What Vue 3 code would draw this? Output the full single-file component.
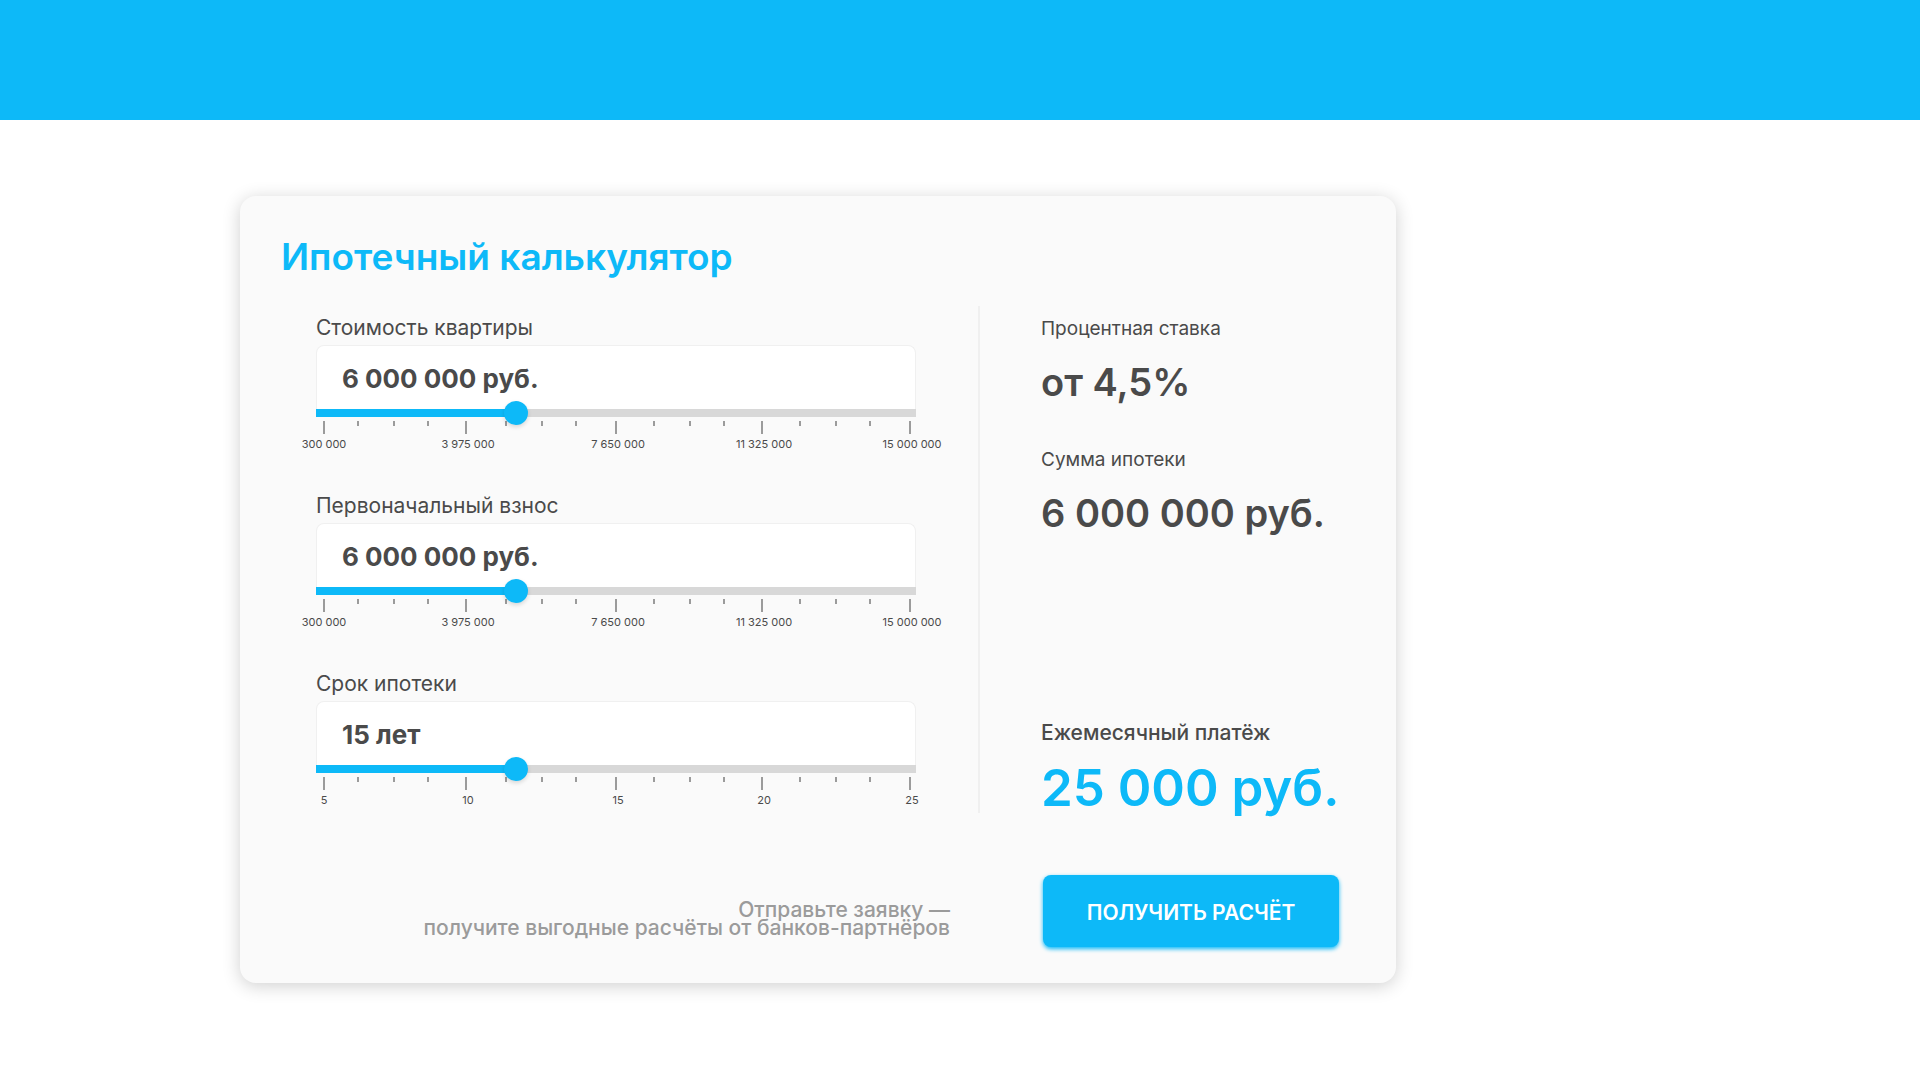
<script setup>
import { reactive } from 'vue'

const money = ['300 000', '3 975 000', '7 650 000', '11 325 000', '15 000 000']

const fields = reactive([
  { id: 'price', label: 'Стоимость квартиры', value: '6 000 000 руб.', position: 326, marks: money },
  { id: 'deposit', label: 'Первоначальный взнос', value: '6 000 000 руб.', position: 326, marks: money },
  { id: 'term', label: 'Срок ипотеки', value: '15 лет', position: 326, marks: ['5', '10', '15', '20', '25'] }
])

const ticks = [8, 42, 78, 112, 150, 190, 226, 260, 300, 338, 374, 408, 446, 484, 520, 554, 594]
</script>

<template>
  <header class="topbar"></header>
  <main class="page">
    <form class="card" @submit.prevent>
      <h1 class="title">Ипотечный калькулятор</h1>

      <div class="columns">
        <div class="fields">
          <div v-for="field in fields" :key="field.id" class="field">
            <label class="field-label" :for="field.id">{{ field.label }}</label>
            <input :id="field.id" v-model="field.value" class="field-input" type="text" />
            <input
              v-model="field.position"
              class="slider"
              type="range"
              min="0"
              max="1000"
              :aria-label="field.label"
              :style="{ '--position': field.position / 1000 }"
            />
            <svg class="ticks" viewBox="0 0 600 14" aria-hidden="true">
              <rect
                v-for="(x, i) in ticks"
                :key="x"
                :x="x - 1"
                y="1"
                width="2"
                :height="i % 4 === 0 ? 13 : 5"
              />
            </svg>
            <div class="marks">
              <span v-for="mark in field.marks" :key="mark" class="mark">{{ mark }}</span>
            </div>
          </div>
        </div>

        <dl class="results">
          <div class="result">
            <dt>Процентная ставка</dt>
            <dd>от 4,5%</dd>
          </div>
          <div class="result">
            <dt>Сумма ипотеки</dt>
            <dd>6 000 000 руб.</dd>
          </div>
          <div class="result payment">
            <dt>Ежемесячный платёж</dt>
            <dd>25 000 руб.</dd>
          </div>
        </dl>
      </div>

      <div class="actions">
        <p class="hint">Отправьте заявку —<br />получите выгодные расчёты от банков-партнёров</p>
        <button class="submit" type="submit">ПОЛУЧИТЬ РАСЧЁТ</button>
      </div>
    </form>
  </main>
</template>

<style>
body {
  margin: 0;
  background: #fff;
}
</style>

<style scoped>
.topbar {
  height: 120px;
  background: #0db9f8;
}

.page {
  padding: 76px 240px;
  color: #4a4a4a;
  font-family: Inter, "Noto Sans", sans-serif;
}

.card {
  box-sizing: border-box;
  max-width: 1156px;
  padding: 39px 57px 36px 41px;
  border-radius: 16px;
  background: #fafafa;
  box-shadow: 0 3px 18px rgba(0, 0, 0, 0.19);
}

.title {
  margin: 0 0 27px;
  color: #0db9f8;
  font-size: 37px;
  font-weight: 600;
  line-height: 44px;
}

.columns,
.actions {
  display: grid;
  grid-template-columns: minmax(0, 1fr) 359px;
}

.fields {
  display: flex;
  flex-direction: column;
  gap: 43px;
  padding: 10px 62px 6px 35px;
  border-right: 2px solid #f0f0f0;
}

.field {
  display: flex;
  flex-direction: column;
}

.field-label {
  margin-bottom: 5px;
  font-size: 21px;
  line-height: 24px;
}

.field-input {
  box-sizing: border-box;
  width: 100%;
  height: 64px;
  padding: 2px 25px 0;
  border: 1px solid #f0f0f0;
  border-bottom: 0;
  border-radius: 8px 8px 0 0;
  outline: 0;
  background: #fff;
  color: inherit;
  font: inherit;
  font-size: 26px;
  font-weight: 700;
}

.slider {
  --fill: calc(12px + (100% - 24px) * var(--position));
  z-index: 1;
  width: 100%;
  height: 24px;
  margin: -8px 0 0;
  appearance: none;
  background: linear-gradient(to right, #0db9f8 var(--fill), #d8d8d8 var(--fill)) center / 100% 8px no-repeat;
  cursor: pointer;
}

.slider::-webkit-slider-thumb {
  width: 24px;
  height: 24px;
  appearance: none;
  border-radius: 50%;
  background: #0db9f8;
  box-shadow: 0 2px 4px rgba(0, 0, 0, 0.14);
}

.ticks {
  display: block;
  width: 100%;
  margin-top: -5px;
  fill: #9b9b9b;
}

.marks {
  display: grid;
  grid-template-columns: 144fr 150fr 146fr 148fr 0;
  margin: 4px 4px 1px 8px;
}

.mark {
  display: flex;
  justify-content: center;
  width: 0;
  font-size: 11px;
  line-height: 12px;
  white-space: nowrap;
}

.results {
  display: flex;
  flex-direction: column;
  gap: 44px;
  margin: 0;
  padding: 11px 0 0 61px;
}

.result dt {
  font-size: 19px;
  line-height: 24px;
}

.result dd {
  margin: 19px 0 0;
  font-size: 38px;
  font-weight: 600;
  line-height: 44px;
  white-space: nowrap;
}

.payment {
  margin-top: auto;
}

.payment dt {
  font-size: 21px;
  font-weight: 500;
}

.payment dd {
  margin-top: 18px;
  color: #0db9f8;
  font-size: 51px;
  line-height: 50px;
}

.actions {
  margin-top: 62px;
}

.hint {
  margin: 0;
  padding: 26px 30px 0 0;
  color: #9b9b9b;
  font-size: 21px;
  font-weight: 500;
  line-height: 18px;
  text-align: right;
}

.submit {
  height: 72px;
  margin-left: 63px;
  padding: 2px 0 0;
  border: 0;
  border-radius: 8px;
  background: #0db9f8;
  box-shadow: 0 2px 4px #0db9f8;
  color: #fff;
  font: inherit;
  font-size: 21px;
  font-weight: 600;
  cursor: pointer;
}
</style>
